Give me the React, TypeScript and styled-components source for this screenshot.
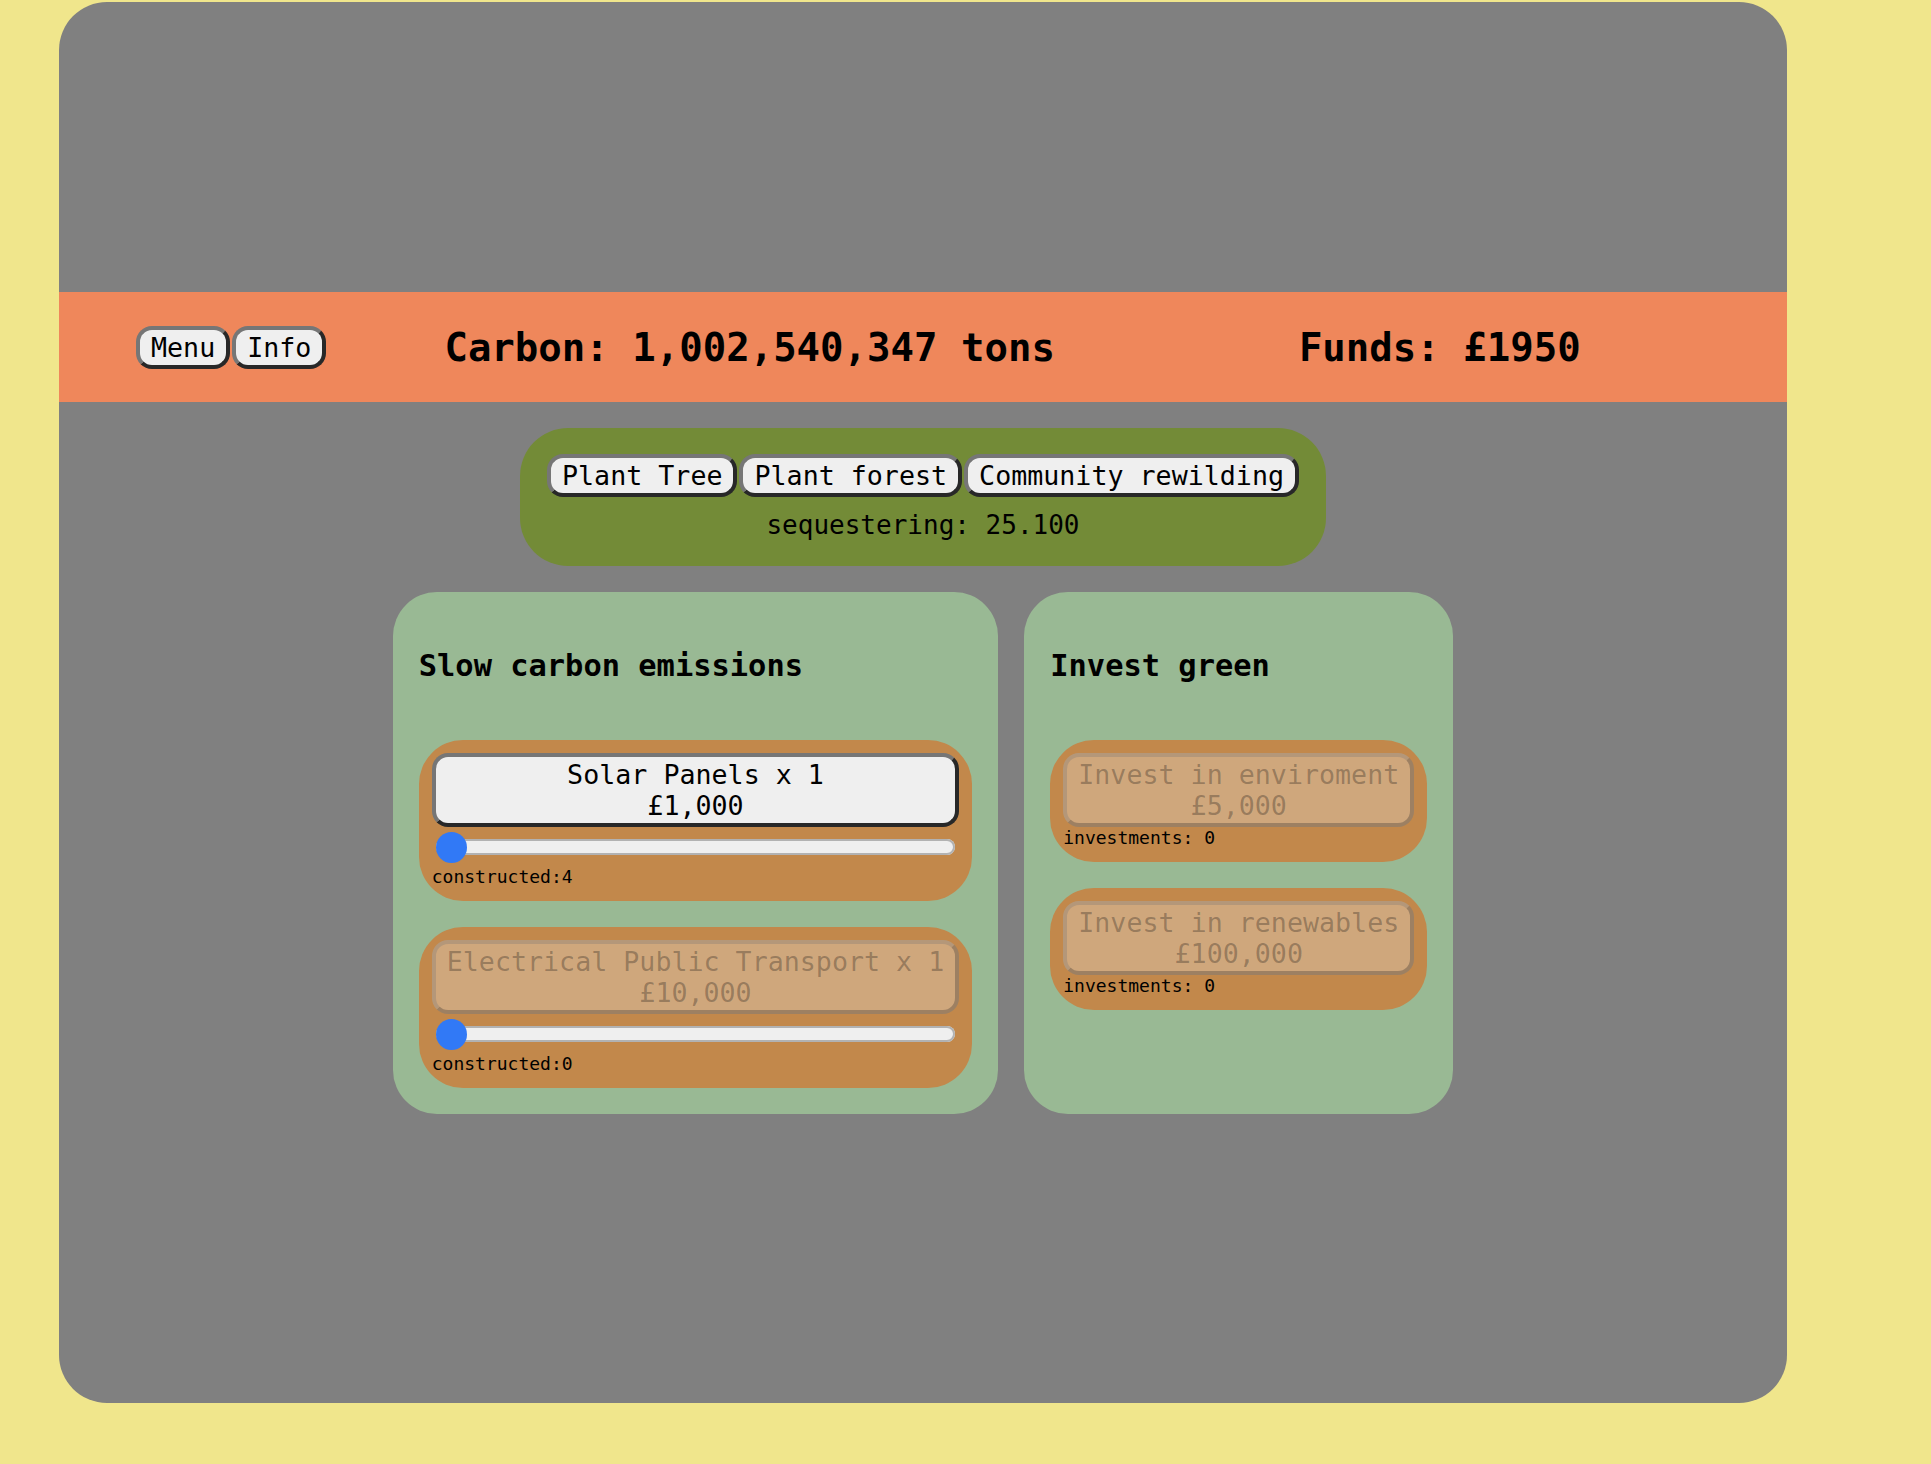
import React from "react";
import styled, { createGlobalStyle } from "styled-components";

const GlobalStyle = createGlobalStyle`
  html, body { margin: 0; padding: 0; }
  body {
    background: #f0e68c;
    font-family: "DejaVu Sans Mono", "Liberation Mono", monospace;
    color: #000;
  }
  * { box-sizing: border-box; }
`;

const Frame = styled.div`
  margin: 2px 0 0 59px;
  width: 1728px;
  height: 1401px;
  background: #808080;
  border-radius: 48px;
  overflow: hidden;
  display: flex;
  flex-direction: column;
  align-items: center;
`;

const Scene = styled.div`
  align-self: stretch;
  height: 290px;
`;

const TopBar = styled.header`
  align-self: stretch;
  height: 110px;
  background: #ef875b;
  display: flex;
  align-items: center;
  padding-left: 77px;
`;

const ButtonGroup = styled.div`
  display: flex;
  gap: 2px;
`;

const Stat = styled.h2<{ $offset: number }>`
  margin: 0 0 0 ${(p) => p.$offset}px;
  font-size: 39px;
  font-weight: bold;
  line-height: normal;
  white-space: nowrap;
`;

const GameButton = styled.button`
  font-family: inherit;
  font-size: 26.67px;
  line-height: normal;
  padding: 2px 11px;
  border: 4px solid;
  border-color: #767676 #282828 #282828 #767676;
  border-radius: 16px;
  background: #efefef;
  color: #000;
  white-space: nowrap;
  text-align: center;
  &:disabled {
    background: rgba(239, 239, 239, 0.3);
    color: rgba(16, 16, 16, 0.3);
    border-color: rgba(118, 118, 118, 0.3) rgba(40, 40, 40, 0.3)
      rgba(40, 40, 40, 0.3) rgba(118, 118, 118, 0.3);
  }
`;

const PlantBox = styled.section`
  margin-top: 26px;
  padding: 26px 27px 26px;
  background: #738b37;
  border-radius: 48px;
  display: flex;
  flex-direction: column;
  align-items: center;
`;

const PlantRow = styled.div`
  display: flex;
  gap: 2px;
`;

const Sequester = styled.p`
  margin: 13px 0 0;
  font-size: 26px;
  line-height: normal;
`;

const Panels = styled.div`
  margin-top: 26px;
  display: flex;
  gap: 26px;
  align-items: stretch;
`;

const Panel = styled.section`
  background: #99b994;
  border-radius: 44px;
  padding: 26px;
  display: flex;
  flex-direction: column;
`;

const PanelTitle = styled.h3`
  margin: 30px 0 57px;
  font-size: 30.4px;
  font-weight: bold;
  line-height: normal;
  white-space: nowrap;
`;

const CardList = styled.div`
  display: flex;
  flex-direction: column;
  gap: 26px;
`;

const Card = styled.div`
  background: #c2884b;
  border-radius: 44px;
  padding: 13px 13px 14px;
  display: flex;
  flex-direction: column;
  align-items: stretch;
`;

const Slider = styled.input`
  -webkit-appearance: none;
  appearance: none;
  margin: 4px 4px 3px;
  padding: 0;
  height: 32px;
  background: transparent;
  &::-webkit-slider-runnable-track {
    height: 16px;
    border-radius: 8px;
    background: #efefef;
    box-shadow: inset 0 0 0 2px #b2b2b2;
  }
  &::-webkit-slider-thumb {
    -webkit-appearance: none;
    appearance: none;
    width: 31px;
    height: 31px;
    border: none;
    border-radius: 50%;
    background: #3179f6;
    margin-top: -7.5px;
  }
`;

const Note = styled.div`
  font-size: 18px;
  line-height: normal;
  white-space: nowrap;
`;

type Build = { name: string; price: string; built: number; enabled: boolean };
type Invest = { name: string; price: string; count: number; enabled: boolean };

const builds: Build[] = [
  { name: "Solar Panels x 1", price: "£1,000", built: 4, enabled: true },
  { name: "Electrical Public Transport x 1", price: "£10,000", built: 0, enabled: false },
];

const invests: Invest[] = [
  { name: "Invest in enviroment", price: "£5,000", count: 0, enabled: false },
  { name: "Invest in renewables", price: "£100,000", count: 0, enabled: false },
];

export default function App() {
  return (
    <>
      <GlobalStyle />
      <Frame>
        <Scene />
        <TopBar>
          <ButtonGroup>
            <GameButton>Menu</GameButton>
            <GameButton>Info</GameButton>
          </ButtonGroup>
          <Stat $offset={118}>Carbon: 1,002,540,347 tons</Stat>
          <Stat $offset={244}>Funds: £1950</Stat>
        </TopBar>
        <PlantBox>
          <PlantRow>
            <GameButton>Plant Tree</GameButton>
            <GameButton>Plant forest</GameButton>
            <GameButton>Community rewilding</GameButton>
          </PlantRow>
          <Sequester>sequestering: 25.100</Sequester>
        </PlantBox>
        <Panels>
          <Panel>
            <PanelTitle>Slow carbon emissions</PanelTitle>
            <CardList>
              {builds.map((b) => (
                <Card key={b.name}>
                  <GameButton disabled={!b.enabled}>
                    {b.name}
                    <br />
                    {b.price}
                  </GameButton>
                  <Slider type="range" min={1} max={10} defaultValue={1} />
                  <Note>constructed:{b.built}</Note>
                </Card>
              ))}
            </CardList>
          </Panel>
          <Panel>
            <PanelTitle>Invest green</PanelTitle>
            <CardList>
              {invests.map((i) => (
                <Card key={i.name}>
                  <GameButton disabled={!i.enabled}>
                    {i.name}
                    <br />
                    {i.price}
                  </GameButton>
                  <Note>investments: {i.count}</Note>
                </Card>
              ))}
            </CardList>
          </Panel>
        </Panels>
      </Frame>
    </>
  );
}
